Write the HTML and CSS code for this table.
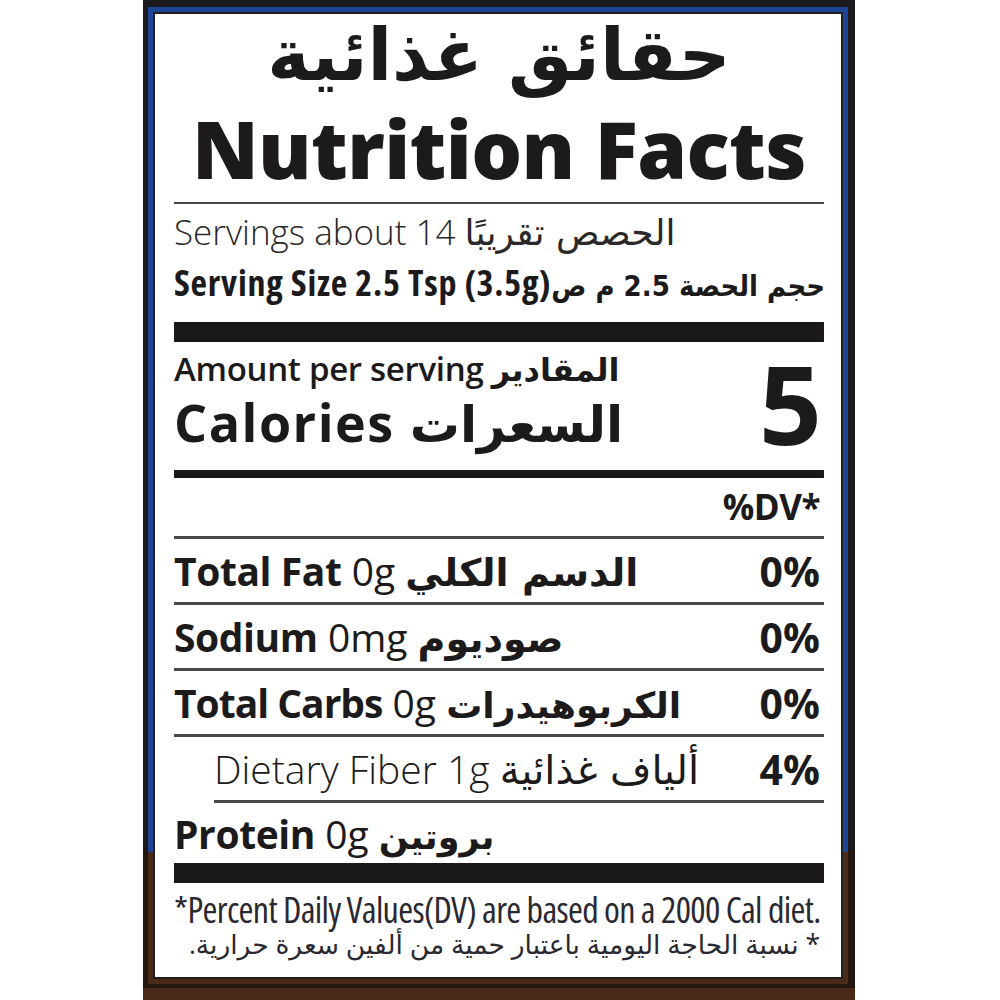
FILE: index.html
```html
<!DOCTYPE html>
<html lang="en">
<head>
<meta charset="utf-8">
<title>Nutrition Facts</title>
<link rel="stylesheet" href="styles.css">
</head>
<body>
<div class="label">
  <div class="stripe">
    <div class="panel">
      <div class="title-ar" dir="rtl">حقائق غذائية</div>
      <div class="title-en">Nutrition Facts</div>
      <div class="rule thin top-rule"></div>
      <div class="servings">Servings about 14 <span class="ar" dir="rtl">الحصص تقريبًا</span></div>
      <div class="size">Serving Size 2.5 Tsp (3.5g)<span class="ar" dir="rtl">حجم الحصة 2.5 م ص</span></div>
      <div class="bar"></div>
      <div class="calories">
        <div class="cal-text">
          <div class="amount">Amount per serving <span class="ar" dir="rtl">المقادير</span></div>
          <div class="cal-label">Calories <span class="ar" dir="rtl">السعرات</span></div>
        </div>
        <div class="cal-num">5</div>
      </div>
      <div class="rule mid"></div>
      <div class="dv">%DV*</div>
      <div class="rule thin"></div>
      <div class="row"><div class="name"><b>Total Fat</b> 0g <b class="ar fat" dir="rtl">الدسم الكلي</b></div><div class="pct">0%</div></div>
      <div class="rule thin"></div>
      <div class="row"><div class="name"><b>Sodium</b> 0mg <b class="ar sod" dir="rtl">صوديوم</b></div><div class="pct">0%</div></div>
      <div class="rule thin"></div>
      <div class="row"><div class="name"><b class="tight">Total Carbs</b> 0g <b class="ar carb" dir="rtl">الكربوهيدرات</b></div><div class="pct">0%</div></div>
      <div class="rule thin"></div>
      <div class="row sub"><div class="name">Dietary Fiber 1g <span class="ar fib" dir="rtl">ألياف غذائية</span></div><div class="pct">4%</div></div>
      <div class="rule thin sub-rule"></div>
      <div class="row protein"><div class="name"><b>Protein</b> 0g <b class="ar prot" dir="rtl">بروتين</b></div></div>
      <div class="bar bottom-bar"></div>
      <div class="foot-en">*Percent Daily Values(DV) are based on a 2000 Cal diet.</div>
      <div class="foot-ar" dir="rtl">* نسبة الحاجة اليومية باعتبار حمية من ألفين سعرة حرارية.</div>
    </div>
  </div>
</div>
</body>
</html>
```

FILE: styles.css
```css
html, body {
  margin: 0;
  padding: 0;
  background: #ffffff;
}

body {
  font-family: "Open Sans", "DejaVu Sans", sans-serif;
  color: #1c1a1a;
  overflow: hidden;
}

.ar {
  font-family: "DejaVu Sans", sans-serif;
}

.label {
  margin-left: 143px;
  width: 712px;
  height: 1000px;
  box-sizing: border-box;
  padding: 7px 7px 0 5px;
  background: linear-gradient(to bottom, #1b1b1f 0, #1b1b1f 850px, #24170f 850px, #24170f 988px, #4a2a19 988px);
}

.stripe {
  padding: 5px;
  background: linear-gradient(to bottom, #1d4597 0, #1d4597 845px, #4a2a19 845px);
}

.panel {
  height: 967px;
  box-sizing: border-box;
  background: #ffffff;
  border: 2px solid #231f1f;
  padding: 0 17px 0 19px;
  display: flex;
  flex-direction: column;
}

.title-ar {
  font-family: "DejaVu Sans", sans-serif;
  font-weight: 700;
  font-size: 72px;
  line-height: 82px;
  height: 90px;
  text-align: center;
  flex: none;
}

.title-en {
  font-weight: 800;
  font-size: 80px;
  line-height: 90px;
  height: 90px;
  margin-top: -1px;
  text-align: center;
  letter-spacing: -0.6px;
  flex: none;
}

.rule {
  background: #4a4848;
  flex: none;
}

.rule.thin {
  height: 3px;
}

.rule.top-rule {
  height: 2px;
  margin-top: 9px;
}

.servings {
  font-size: 35px;
  font-weight: 300;
  line-height: 56px;
  height: 56px;
  color: #2a2828;
  white-space: nowrap;
  flex: none;
}

.servings .ar {
  font-weight: 400;
  font-size: 36px;
}

.size {
  font-size: 36px;
  font-weight: 700;
  line-height: 46px;
  height: 46px;
  font-stretch: 80%;
  letter-spacing: 0.8px;
  white-space: nowrap;
  flex: none;
}

.size .ar {
  font-size: 29px;
  font-weight: 700;
  letter-spacing: 0;
}

.bar {
  height: 20px;
  background: #1a1818;
  margin-top: 16px;
  flex: none;
}

.calories {
  display: flex;
  justify-content: space-between;
  align-items: flex-start;
  height: 128px;
  flex: none;
}

.cal-text {
  padding-top: 7px;
}

.amount {
  font-size: 33px;
  font-weight: 600;
  line-height: 40px;
  letter-spacing: -0.3px;
  white-space: nowrap;
}

.amount .ar {
  font-size: 32px;
  font-weight: 700;
  letter-spacing: 0;
}

.cal-label {
  font-size: 52px;
  font-weight: 700;
  letter-spacing: 1.5px;
  line-height: 56px;
  margin-top: 4px;
  white-space: nowrap;
}

.cal-label .ar {
  font-size: 50px;
  letter-spacing: 0;
}

.cal-num {
  font-size: 110px;
  font-weight: 700;
  line-height: 110px;
  margin-top: 5px;
  margin-right: 2px;
}

.rule.mid {
  height: 8px;
  background: #1a1818;
}

.dv {
  text-align: right;
  font-size: 35px;
  font-weight: 700;
  letter-spacing: -0.5px;
  line-height: 58px;
  height: 58px;
  padding-right: 4px;
  flex: none;
}

.row {
  display: flex;
  justify-content: space-between;
  align-items: center;
  height: 63px;
  font-size: 39px;
  white-space: nowrap;
  flex: none;
}

.row .name {
  font-weight: 400;
}

.row b {
  font-weight: 700;
  letter-spacing: -0.4px;
}

.row b.tight {
  letter-spacing: -1px;
}

.row b.ar {
  letter-spacing: 0;
}

.row .ar.fat,
.row .ar.sod {
  font-size: 38px;
}

.row .ar.carb {
  font-size: 36px;
}

.row .ar.prot {
  font-size: 35px;
}

.row .ar.fib {
  font-size: 40px;
  font-weight: 400;
}

.row .pct {
  font-weight: 700;
  font-size: 41px;
  padding-right: 4px;
}

.row.sub {
  padding-left: 40px;
}

.row.sub .name {
  font-weight: 300;
}

.row.protein {
  height: 60px;
}

.sub-rule {
  margin-left: 40px;
}

.bottom-bar {
  margin-top: 0;
}

.foot-en {
  font-size: 36px;
  font-stretch: 75%;
  letter-spacing: -0.65px;
  line-height: 38px;
  margin-top: 8px;
  color: #2a2830;
  white-space: nowrap;
  flex: none;
}

.foot-ar {
  font-size: 26.5px;
  line-height: 30px;
  padding-right: 4px;
  color: #2a2830;
  white-space: nowrap;
  flex: none;
}
```
